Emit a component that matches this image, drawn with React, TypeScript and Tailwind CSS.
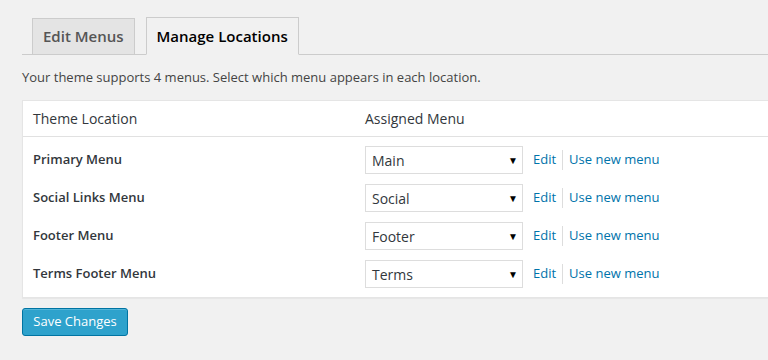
const rows = [
  { location: "Primary Menu", menu: "Main" },
  { location: "Social Links Menu", menu: "Social" },
  { location: "Footer Menu", menu: "Footer" },
  { location: "Terms Footer Menu", menu: "Terms" },
];

function MenuSelect(props: { value: string }) {
  return (
    <div className="flex h-[28px] w-[158px] items-center justify-between border border-[#dddddd] bg-white pl-[6px] pr-[4px] text-[14px] text-[#32373c]">
      <span>{props.value}</span>
      <span className="text-[10px] text-black">▼</span>
    </div>
  );
}

export default function App() {
  return (
    <div
      className="h-[360px] w-[768px] overflow-hidden bg-[#f1f1f1] pl-[22px] pt-[17px] text-[#444444]"
      style={{ fontFamily: '"Open Sans", "Liberation Sans", sans-serif' }}
    >
      {/* tabs */}
      <div className="flex items-end gap-[11px] border-b border-[#cccccc] pl-[10px]">
        <div className="-mb-px flex h-[37px] items-center border border-[#cccccc] bg-[#e4e4e4] px-[10px] text-[15px] font-semibold text-[#555555]">
          Edit Menus
        </div>
        <div className="-mb-px flex h-[38px] items-center border border-b-[#f1f1f1] border-[#cccccc] bg-[#f1f1f1] px-[10px] text-[15px] font-semibold text-black">
          Manage Locations
        </div>
      </div>

      <p className="mt-[12px] text-[13px] leading-[20px]">
        Your theme supports 4 menus. Select which menu appears in each location.
      </p>

      {/* locations table */}
      <div className="mt-[13px] w-[760px] border border-r-0 border-[#e5e5e5] bg-white shadow-[0_1px_1px_rgba(0,0,0,0.04)]">
        <div className="flex h-[36px] items-center border-b border-[#e1e1e1] text-[14px] text-[#32373c]">
          <div className="w-[342px] pl-[10px]">Theme Location</div>
          <div>Assigned Menu</div>
        </div>
        <div className="py-[4px]">
          {rows.map((row) => (
            <div key={row.location} className="flex h-[38px] items-center text-[13px]">
              <div className="w-[342px] pl-[10px] font-semibold text-[#32373c]">{row.location}</div>
              <MenuSelect value={row.menu} />
              <div className="ml-[10px] flex items-center text-[#0073aa]">
                <span>Edit</span>
                <span className="mx-[6px] h-[20px] w-px bg-[#dddddd]" />
                <span>Use new menu</span>
              </div>
            </div>
          ))}
        </div>
      </div>

      <button className="mt-[10px] flex h-[28px] w-[106px] items-center justify-center rounded-[3px] border border-[#0074a2] bg-[#2ea2cc] text-[13px] text-white shadow-[inset_0_1px_0_rgba(120,200,230,0.5)]">
        Save Changes
      </button>
    </div>
  );
}
